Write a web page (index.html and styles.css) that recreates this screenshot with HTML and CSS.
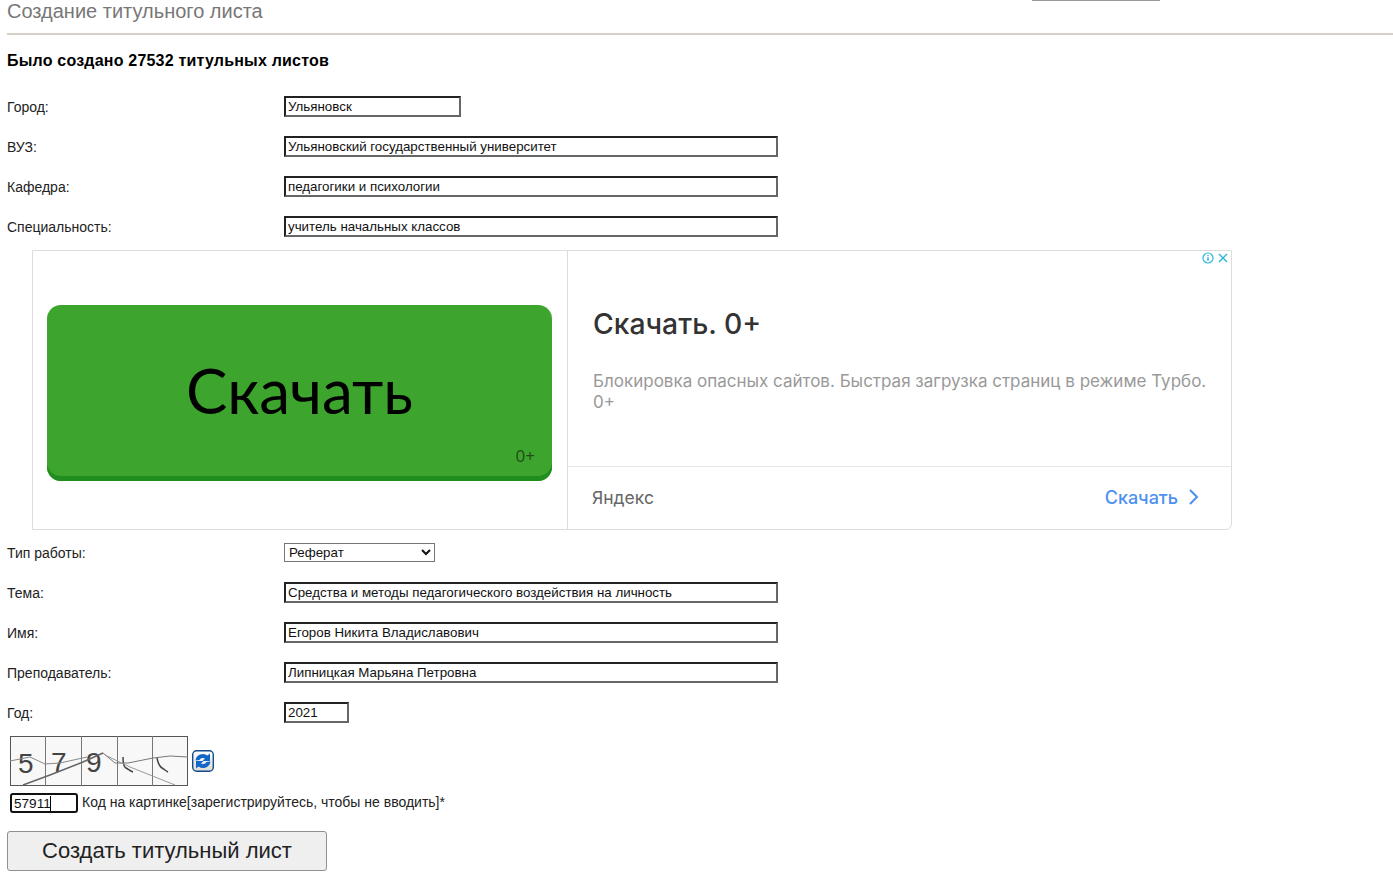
FILE: index.html
```html
<!DOCTYPE html>
<html lang="ru">
<head>
<meta charset="utf-8">
<title>Создание титульного листа</title>
<link rel="stylesheet" href="styles.css">
</head>
<body>
<div class="page">
  <header class="page-head">
    <h1 class="page-title">Создание титульного листа</h1>
    <span class="top-tab"></span>
  </header>
  <h2 class="counter">Было создано 27532 титульных листов</h2>
  <form class="form">
    <div class="row"><label class="lbl">Город:</label><input class="field w-city" value="Ульяновск"></div>
    <div class="row"><label class="lbl">ВУЗ:</label><input class="field w-long" value="Ульяновский государственный университет"></div>
    <div class="row"><label class="lbl">Кафедра:</label><input class="field w-long" value="педагогики и психологии"></div>
    <div class="row"><label class="lbl">Специальность:</label><input class="field w-long" value="учитель начальных классов"></div>

    <aside class="ad">
      <div class="ad-marks">
        <svg class="ad-icon" viewBox="0 0 12 12"><circle cx="6" cy="6" r="5" fill="none" stroke="#2bb5d8" stroke-width="1.2"/><path d="M6 5.2v3.6M6 3v1.2" stroke="#2bb5d8" stroke-width="1.4" fill="none"/></svg>
        <svg class="ad-icon" viewBox="0 0 12 12"><path d="M2 2l8 8M10 2l-8 8" stroke="#2bb5d8" stroke-width="1.4" fill="none"/></svg>
      </div>
      <div class="ad-left">
        <div class="ad-button">
          <span class="ad-button-text">Скачать</span>
          <span class="ad-age">0+</span>
        </div>
      </div>
      <div class="ad-right">
        <div class="ad-body">
          <div class="ad-title">Скачать. 0+</div>
          <div class="ad-desc">Блокировка опасных сайтов. Быстрая загрузка страниц в режиме Турбо. 0+</div>
        </div>
        <div class="ad-foot">
          <span class="ad-brand">Яндекс</span>
          <span class="ad-cta">Скачать
            <svg class="ad-chev" viewBox="0 0 11 18"><path d="M2 2l7 7-7 7" fill="none" stroke="#4d90f0" stroke-width="2"/></svg>
          </span>
        </div>
      </div>
    </aside>

    <div class="row"><label class="lbl">Тип работы:</label><select class="sel"><option>Реферат</option></select></div>
    <div class="row"><label class="lbl">Тема:</label><input class="field w-long" value="Средства и методы педагогического воздействия на личность"></div>
    <div class="row"><label class="lbl">Имя:</label><input class="field w-long" value="Егоров Никита Владиславович"></div>
    <div class="row"><label class="lbl">Преподаватель:</label><input class="field w-long" value="Липницкая Марьяна Петровна"></div>
    <div class="row"><label class="lbl">Год:</label><input class="field w-year" value="2021"></div>

    <div class="captcha-row">
      <svg class="captcha" viewBox="0 0 178 50">
        <rect x="0.5" y="0.5" width="177" height="49" fill="#f8f8f8" stroke="#555"/>
        <path d="M35.500 0v50M71.500 0v50M107.500 0v50M142.500 0v50" stroke="#777" fill="none"/>
        <text class="cap-digit" x="8" y="37">5</text>
        <text class="cap-digit" x="41" y="36">7</text>
        <text class="cap-digit" x="76" y="36">9</text>
        <path d="M113 21c0 5 1 10 3 11s4 3 7 4M147 22c1 5 3 9 5 10s4 3 6 4" fill="none" stroke="#444" stroke-width="1.500"/>
        <path d="M0 25l20-4 15 7 15-1 27-6" fill="none" stroke="#888"/>
        <path d="M93 17l12 10 13 0 25-5 17-2 18 1" fill="none" stroke="#777"/>
        <path d="M13 49l27-10 33-13 20-9" fill="none" stroke="#666" stroke-width="1.500"/>
        <path d="M95 19l25 12 45 18" fill="none" stroke="#999"/>
      </svg>
      <svg class="refresh" viewBox="0 0 22 22">
        <defs><linearGradient id="rg" x1="0" y1="0" x2="0" y2="1"><stop offset="0" stop-color="#fff"/><stop offset="1" stop-color="#dcdcd2"/></linearGradient></defs>
        <rect x="0.7" y="0.7" width="20.600" height="20.600" rx="4" fill="url(#rg)" stroke="#124a8c" stroke-width="1.400"/>
        <path d="M3.500 10.500a7.500 7.500 0 0 1 12-5l2.500-2v7.500h-7.500l2.500-2.500a4 4 0 0 0-5.500 1.500z" fill="#1266c9"/>
        <path d="M18.500 11.500a7.500 7.500 0 0 1-12 5l-2.500 2V11h7.500l-2.500 2.500a4 4 0 0 0 5.500-1.500z" fill="#1266c9"/>
      </svg>
    </div>
    <div class="code-row">
      <span class="code-box"><input class="code-input" value="57911"><span class="caret"></span></span>
      <span class="code-text">Код на картинке[зарегистрируйтесь, чтобы не вводить]*</span>
    </div>
    <button type="button" class="submit">Создать титульный лист</button>
  </form>
</div>
</body>
</html>
```
FILE: styles.css
```css
* { box-sizing: border-box; }
html, body { margin: 0; padding: 0; background: #fff; }
body { font-family: "Liberation Sans", Arial, sans-serif; color: #222; overflow: hidden; height: 881px; }
.page { padding-left: 7px; }

.page-head { position: relative; height: 35px; border-bottom: 2px solid #d5cfc6; }
.page-title { margin: 0; font-size: 20px; line-height: 23px; font-weight: normal; color: #777; }
.top-tab { position: absolute; left: 1025px; top: 0; width: 128px; height: 1px; background: #999; }

.counter { margin: 0; height: 51px; padding-top: 17px; font-size: 16px; line-height: 18px; font-weight: bold; letter-spacing: 0.2px; color: #000; }

.row { display: flex; align-items: center; height: 40px; }
.lbl { width: 277px; padding-top: 2px; font-size: 14px; color: #222; }
.field {
  height: 21px; padding: 0 2px; margin: 0;
  font: 13.33px "Liberation Sans", Arial, sans-serif; color: #111;
  border: 2px solid; border-color: #222 #666 #666 #222; background: #fff;
}
.w-city { width: 177px; }
.w-long { width: 494px; }
.w-year { width: 65px; }
.sel {
  width: 151px; height: 19px; padding: 0; margin: 0;
  font: 13.33px "Liberation Sans", Arial, sans-serif; color: #111;
  background: #fff; border: 1px solid #767676;
}

.ad {
  position: relative; display: flex; width: 1200px; height: 280px;
  margin: 4px 0 2px 25px; border: 1px solid #ddd; border-radius: 0 0 6px 0;
}
.ad-marks { position: absolute; top: 1px; right: 2px; display: flex; gap: 3px; }
.ad-icon { width: 12px; height: 12px; display: block; }
.ad-left { width: 535px; flex: none; padding: 54px 15px 0 14px; border-right: 1px solid #ddd; }
.ad-button {
  position: relative; display: flex; align-items: center; justify-content: center;
  width: 505px; height: 176px; padding-bottom: 6px;
  background: #3da52d; border-radius: 14px; box-shadow: inset 0 -5px 0 #1f8d1f;
}
.ad-button-text { font-family: Lato, "Open Sans", sans-serif; font-size: 62px; color: #000; }
.ad-age { position: absolute; right: 17px; bottom: 14px; font-family: "Open Sans", sans-serif; font-size: 17px; color: #1d4d16; }
.ad-right { flex: 1; display: flex; flex-direction: column; }
.ad-body { flex: 1; padding: 53px 24px 0 25px; }
.ad-title { font-family: "Inter", sans-serif; font-size: 28.3px; line-height: 40px; font-weight: 500; color: #333; }
.ad-desc { margin-top: 27px; font-family: "Inter", sans-serif; font-size: 17px; line-height: 21px; color: #999; }
.ad-foot {
  display: flex; align-items: center; justify-content: space-between;
  height: 63px; padding: 0 32px 2px 24px; border-top: 1px solid #e6e6e6;
}
.ad-brand { font-family: "Inter", sans-serif; font-size: 17.5px; color: #666; }
.ad-cta { display: flex; align-items: center; gap: 10px; font-family: "Inter", sans-serif; font-size: 18px; font-weight: 500; color: #4d90f0; }
.ad-chev { width: 11px; height: 18px; display: block; }

.captcha-row { display: flex; align-items: center; gap: 4px; margin: 4px 0 0 3px; }
.captcha { width: 178px; height: 50px; display: block; }
.cap-digit { font-family: "Liberation Sans", Arial, sans-serif; font-size: 28px; fill: #444; }
.refresh { width: 22px; height: 22px; display: block; }

.code-row { display: flex; align-items: center; gap: 4px; margin: 7px 0 0 3px; }
.code-box { position: relative; display: block; width: 68px; height: 20px; }
.code-input {
  display: block; width: 68px; height: 20px; padding: 0 2px; margin: 0;
  font: 13.6px "Liberation Sans", Arial, sans-serif; color: #111;
  border: 2px solid #111; border-radius: 3px; background: #fff; outline: none;
}
.caret { position: absolute; left: 40px; top: 3px; width: 1px; height: 15px; background: #000; }
.code-text { position: relative; top: -1px; font-size: 14px; color: #222; }

.submit {
  display: block; width: 320px; height: 40px; margin: 18px 0 0; padding: 0;
  font: 22px "Liberation Sans", Arial, sans-serif; color: #222;
  background: #efefef; border: 1px solid #8f8f8f; border-radius: 3px;
}
```
